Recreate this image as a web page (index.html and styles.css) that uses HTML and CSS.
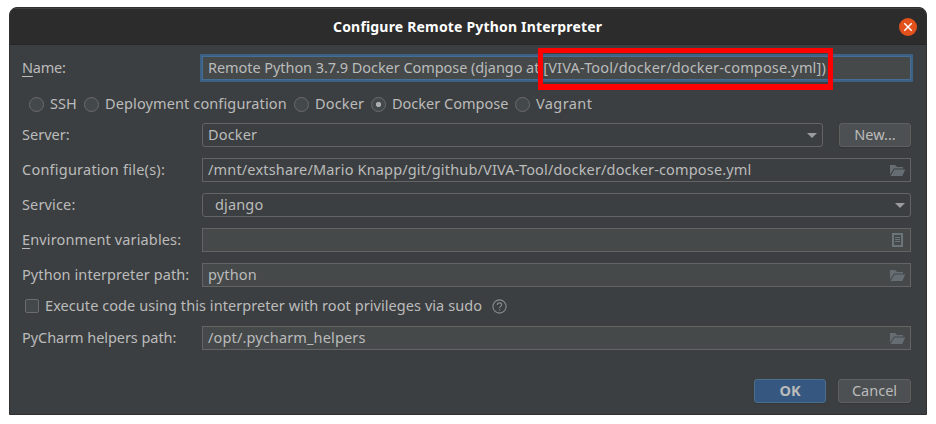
FILE: index.html
```html
<!DOCTYPE html>
<html lang="en">
<head>
<meta charset="utf-8">
<title>Configure Remote Python Interpreter</title>
<link rel="stylesheet" href="styles.css">
</head>
<body>
<svg class="defs" width="0" height="0" aria-hidden="true">
  <symbol id="folder" viewBox="0 0 16 12"><path d="M0 0h5l2 2h6v1.4H4L0 9.5z"/><path d="M4.4 4.5H15.2L12.3 11H.5z"/></symbol>
</svg>
<main class="dialog">
  <header class="titlebar">
    <h1 class="title"><span class="t-title">Configure Remote Python Interpreter</span></h1>
    <button class="close" aria-label="Close"><svg width="18" height="18" viewBox="0 0 18 18"><path d="M5.3 5.3l7.4 7.4M12.7 5.3l-7.4 7.4"/></svg></button>
  </header>
  <form class="form">
    <div class="row row-name">
      <label class="label"><span class="t-name"><u>N</u>ame:</span></label>
      <div class="field focused"><span class="t-value-a">Remote Python 3.7.9 Docker Compose (django at</span><span class="marked"><span class="t-value-b">[VIVA-Tool/docker/docker-compose.yml])</span></span></div>
    </div>
    <div class="radios">
      <label class="option o-ssh"><i class="radio"></i><span class="t-ssh">SSH</span></label>
      <label class="option o-deploy"><i class="radio"></i><span class="t-deploy">Deployment configuration</span></label>
      <label class="option o-docker"><i class="radio"></i><span class="t-docker">Docker</span></label>
      <label class="option o-compose"><i class="radio checked"></i><span class="t-compose">Docker Compose</span></label>
      <label class="option"><i class="radio"></i><span class="t-vagrant">Vagrant</span></label>
    </div>
    <div class="row">
      <label class="label"><span class="t-server">Server:</span></label>
      <div class="field combo"><span class="t-docker">Docker</span><i class="arrow"></i></div>
      <button class="button new" type="button"><span class="t-new">New...</span></button>
    </div>
    <div class="row">
      <label class="label"><span class="t-config">Configuration file(s):</span></label>
      <div class="field readonly"><span class="t-path">/mnt/extshare/Mario Knapp/git/github/VIVA-Tool/docker/docker-compose.yml</span><svg class="folder"><use href="#folder"/></svg></div>
    </div>
    <div class="row">
      <label class="label"><span class="t-service">Service:</span></label>
      <div class="field combo indented"><span class="t-django">django</span><i class="arrow"></i></div>
    </div>
    <div class="row">
      <label class="label"><span class="t-env"><u>E</u>nvironment variables:</span></label>
      <div class="field"><svg class="list" viewBox="0 0 11 14"><path fill-rule="evenodd" d="M0 0h11v14H0zM2 2v10h7V2z"/><path d="M3 4h5v1H3zM3 6h5v1H3zM3 8h5v1H3z"/></svg></div>
    </div>
    <div class="row">
      <label class="label"><span class="t-interp">Python interpreter path:</span></label>
      <div class="field"><span class="t-python">python</span><svg class="folder"><use href="#folder"/></svg></div>
    </div>
    <label class="sudo"><i class="checkbox"></i><span class="t-sudo">Execute code using this interpreter with root privileges via sudo</span>
      <svg class="help" viewBox="0 0 15 15"><circle cx="7.5" cy="7.5" r="6.6"/><path d="M5.3 6.1c0-1.4.9-2.2 2.2-2.2s2.2.8 2.2 1.9c0 1.5-2.1 1.6-2.1 3.2M7.6 10.2v1.2"/></svg>
    </label>
    <div class="row">
      <label class="label"><span class="t-helpers">PyCharm helpers path:</span></label>
      <div class="field"><span class="t-opt">/opt/.pycharm_helpers</span><svg class="folder"><use href="#folder"/></svg></div>
    </div>
    <footer class="actions">
      <button class="button primary" type="button"><span class="t-ok">OK</span></button>
      <button class="button cancel" type="button"><span class="t-cancel">Cancel</span></button>
    </footer>
  </form>
</main>
</body>
</html>
```
FILE: styles.css
```css
* { box-sizing: border-box; }
body { margin: 0; background: #fff; font: 14.5px/20px "Noto Sans", sans-serif; color: #bbb; }
.defs { display: block; }
.dialog { width: 918px; height: 408px; margin: 7px 0 0 9px; background: #3c3f41; border: 1px solid #303030; border-radius: 8px 8px 0 0; overflow: hidden; white-space: nowrap; }
.titlebar { display: flex; align-items: center; height: 37px; padding: 0 9px 0 323px; background: #2c2c2c; border-top: 1px solid #434343; border-bottom: 1px solid #262626; }
.title { flex: 1; margin: 0; font-size: 14px; line-height: 20px; font-weight: 700; color: #fff; }
.close { width: 18px; height: 18px; padding: 0; border: 0; border-radius: 50%; background: #e2501b; }
.close svg { display: block; fill: none; stroke: #fff; stroke-width: 1.5; }
.form { padding: 9px 15px 0 12px; }
.row { display: flex; align-items: center; height: 24px; margin-bottom: 11px; }
.row-name { height: 28px; margin: 0 -2px 0 0; }
.label { flex: 0 0 180px; padding-bottom: 2px; }
.row-name .label { flex-basis: 178px; }
u { text-decoration: underline; text-underline-offset: 3px; text-decoration-thickness: 1px; text-decoration-skip-ink: none; }
.field { flex: 1; display: flex; align-items: center; height: 24px; padding: 0 5px; background: #45494a; border: 1px solid #646464; }
.field > span, .option > span, .sudo > span, .new > span { padding-bottom: 2px; }
.focused { height: 28px; border: 2px solid #3d6185; box-shadow: inset 0 0 0 1px #466d94; padding: 0 6px; }
.combo, .readonly { background: #3c3f41; }
.combo { border-radius: 3px; }
.indented { padding-left: 12px; }
.marked { position: relative; margin-left: 4px; }
.marked::after { content: ""; position: absolute; box-sizing: border-box; left: -5px; top: -9px; width: 295px; height: 42px; border: 5px solid #f00; border-bottom-width: 6px; }
.arrow { width: 0; margin: 1px 0 0 auto; border: solid transparent; border-width: 5px 5px 0; border-top-color: #9a9c9d; }
.radios { display: flex; align-items: center; height: 20px; margin: 12px 0 9px 7px; }
.option { display: flex; align-items: center; gap: 6px; }
.o-ssh { width: 55px; } .o-deploy { width: 210px; } .o-docker { width: 77px; } .o-compose { width: 144px; }
.radio { flex: none; width: 15px; height: 15px; border: 1px solid #6b6b6b; border-radius: 50%; background: #43484a; }
.checked { background: radial-gradient(circle, #adadad 0 2.2px, #43484a 3px); }
.button { display: flex; align-items: center; justify-content: center; width: 73px; height: 24px; padding: 0; border: 1px solid #5e6060; border-radius: 3px; background: #4c5052; color: #bbb; font: inherit; box-shadow: 0 1px 1px #343739; }
.new { width: 72px; margin-left: 16px; }
.button > span { padding-bottom: 2px; }
.primary { width: 72px; background: #365880; border-color: #4c708c; font-weight: 700; }
.folder { flex: none; width: 16px; height: 12px; margin: 1px -1px 0 auto; fill: #676e73; }
.list { flex: none; width: 11px; height: 14px; margin: 0 2px 0 auto; fill: #6b747a; }
.sudo { display: flex; align-items: center; height: 20px; margin: -2px 0 10px 3px; }
.checkbox { width: 14px; height: 14px; margin-right: 6px; border: 1px solid #6b6b6b; border-radius: 2px; background: #43494a; }
.help { width: 15px; height: 15px; margin-left: 10px; fill: none; stroke: #858b8e; stroke-width: 1.1; }
.actions { display: flex; justify-content: flex-end; gap: 12px; margin-top: 29px; }

/* Tracking of the individual captions */
.t-title { letter-spacing: .18px; }
.t-name { letter-spacing: -.2px; }
.t-value-a { letter-spacing: -.06px; }
.t-value-b { letter-spacing: .16px; }
.t-deploy { letter-spacing: .12px; }
.t-docker { letter-spacing: .15px; }
.t-vagrant { letter-spacing: .4px; }
.t-config { letter-spacing: .23px; }
.t-path { letter-spacing: .165px; }
.t-service, .t-django, .t-python { letter-spacing: .15px; }
.t-env { letter-spacing: .13px; }
.t-interp { letter-spacing: .09px; }
.t-sudo { letter-spacing: .065px; }
.t-helpers { letter-spacing: -.06px; }
.t-opt { letter-spacing: .14px; }
```
